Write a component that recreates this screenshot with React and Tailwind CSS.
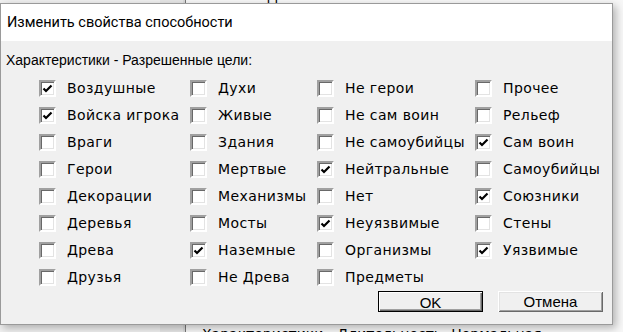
const columns = [
  [
    ["Воздушные", true],
    ["Войска игрока", true],
    ["Враги", false],
    ["Герои", false],
    ["Декорации", false],
    ["Деревья", false],
    ["Древа", false],
    ["Друзья", false],
  ],
  [
    ["Духи", false],
    ["Живые", false],
    ["Здания", false],
    ["Мертвые", false],
    ["Механизмы", false],
    ["Мосты", false],
    ["Наземные", true],
    ["Не Древа", false],
  ],
  [
    ["Не герои", false],
    ["Не сам воин", false],
    ["Не самоубийцы", false],
    ["Нейтральные", true],
    ["Нет", false],
    ["Неуязвимые", true],
    ["Организмы", false],
    ["Предметы", false],
  ],
  [
    ["Прочее", false],
    ["Рельеф", false],
    ["Сам воин", true],
    ["Самоубийцы", false],
    ["Союзники", true],
    ["Стены", false],
    ["Уязвимые", true],
  ],
];

const Check = ({ label, checked }) => (
  <label className="flex h-[27px] items-center gap-[11px] whitespace-nowrap">
    <span className="flex h-[17px] w-[17px] shrink-0 items-center justify-center border-2 border-t-[#a0a0a0] border-l-[#a0a0a0] border-r-white border-b-white bg-white shadow-[inset_1px_1px_0_#696969,inset_-1px_-1px_0_#e3e3e3]">
      {checked && (
        <svg width="11" height="11" viewBox="0 0 11 11">
          <path d="M1.5 5.5 L4 8 L9.5 2.5" fill="none" stroke="#000" strokeWidth="2.2" />
        </svg>
      )}
    </span>
    <span className="font-['DejaVu_Sans',sans-serif] tracking-[0.4px]">{label}</span>
  </label>
);

export default function App() {
  return (
    <div className="relative h-[332px] w-[623px] overflow-hidden bg-[#f0f0f0] font-['Liberation_Sans',sans-serif] text-[14px] text-black">
      {/* window behind the dialog */}
      <div className="flex h-full">
        <div className="w-[160px] bg-[#f0f0f0]" />
        <div className="w-[23px] bg-[#e6e6e6]" />
        <div className="w-[2px] bg-[#dadada]" />
        <div className="w-[1px] bg-[#777]" />
        <div className="flex flex-1 flex-col justify-between bg-[#f7f7f7] pl-[16px]">
          <div className="mt-[-13px] flex gap-[55px] leading-[16px]">
            <span>Ф</span>
            <span>Д</span>
          </div>
          <div className="mb-[-10px] font-['DejaVu_Sans',sans-serif] leading-[16px]">Характеристики - Длительность: Нормальная</div>
        </div>
      </div>

      {/* dialog */}
      <div className="absolute left-0 top-[3px] flex w-[613px] flex-col border border-[#9a9a9a] bg-[#f0f0f0] shadow-[3px_3px_8px_rgba(0,0,0,0.28)]">
        <div className="flex h-[37px] items-center bg-white pl-[6px] font-['Roboto',sans-serif] text-[14.5px]">
          Изменить свойства способности
        </div>
        <div className="flex flex-col px-[5px] pb-[12px]">
          <div className="pt-[11px] leading-[16px]">Характеристики - Разрешенные цели:</div>
          <div className="mt-[7px] grid grid-cols-[151px_127px_158px_1fr] pl-[33px]">
            {columns.map((col, i) => (
              <div key={i} className="flex flex-col">
                {col.map(([label, checked]) => (
                  <Check key={label} label={label} checked={checked} />
                ))}
              </div>
            ))}
          </div>
          <div className="flex justify-end gap-[15px] pr-[4px] text-[15px]">
            <button className="h-[21px] w-[105px] border border-black bg-[#f0f0f0] shadow-[inset_1px_1px_0_#fff,inset_-1px_-1px_0_#696969,inset_-2px_-2px_0_#a0a0a0]">
              OK
            </button>
            <button className="h-[21px] w-[105px] bg-[#f0f0f0] shadow-[inset_1px_1px_0_#fff,inset_-1px_-1px_0_#696969,inset_2px_2px_0_#e3e3e3,inset_-2px_-2px_0_#a0a0a0]">
              Отмена
            </button>
          </div>
        </div>
      </div>
    </div>
  );
}
